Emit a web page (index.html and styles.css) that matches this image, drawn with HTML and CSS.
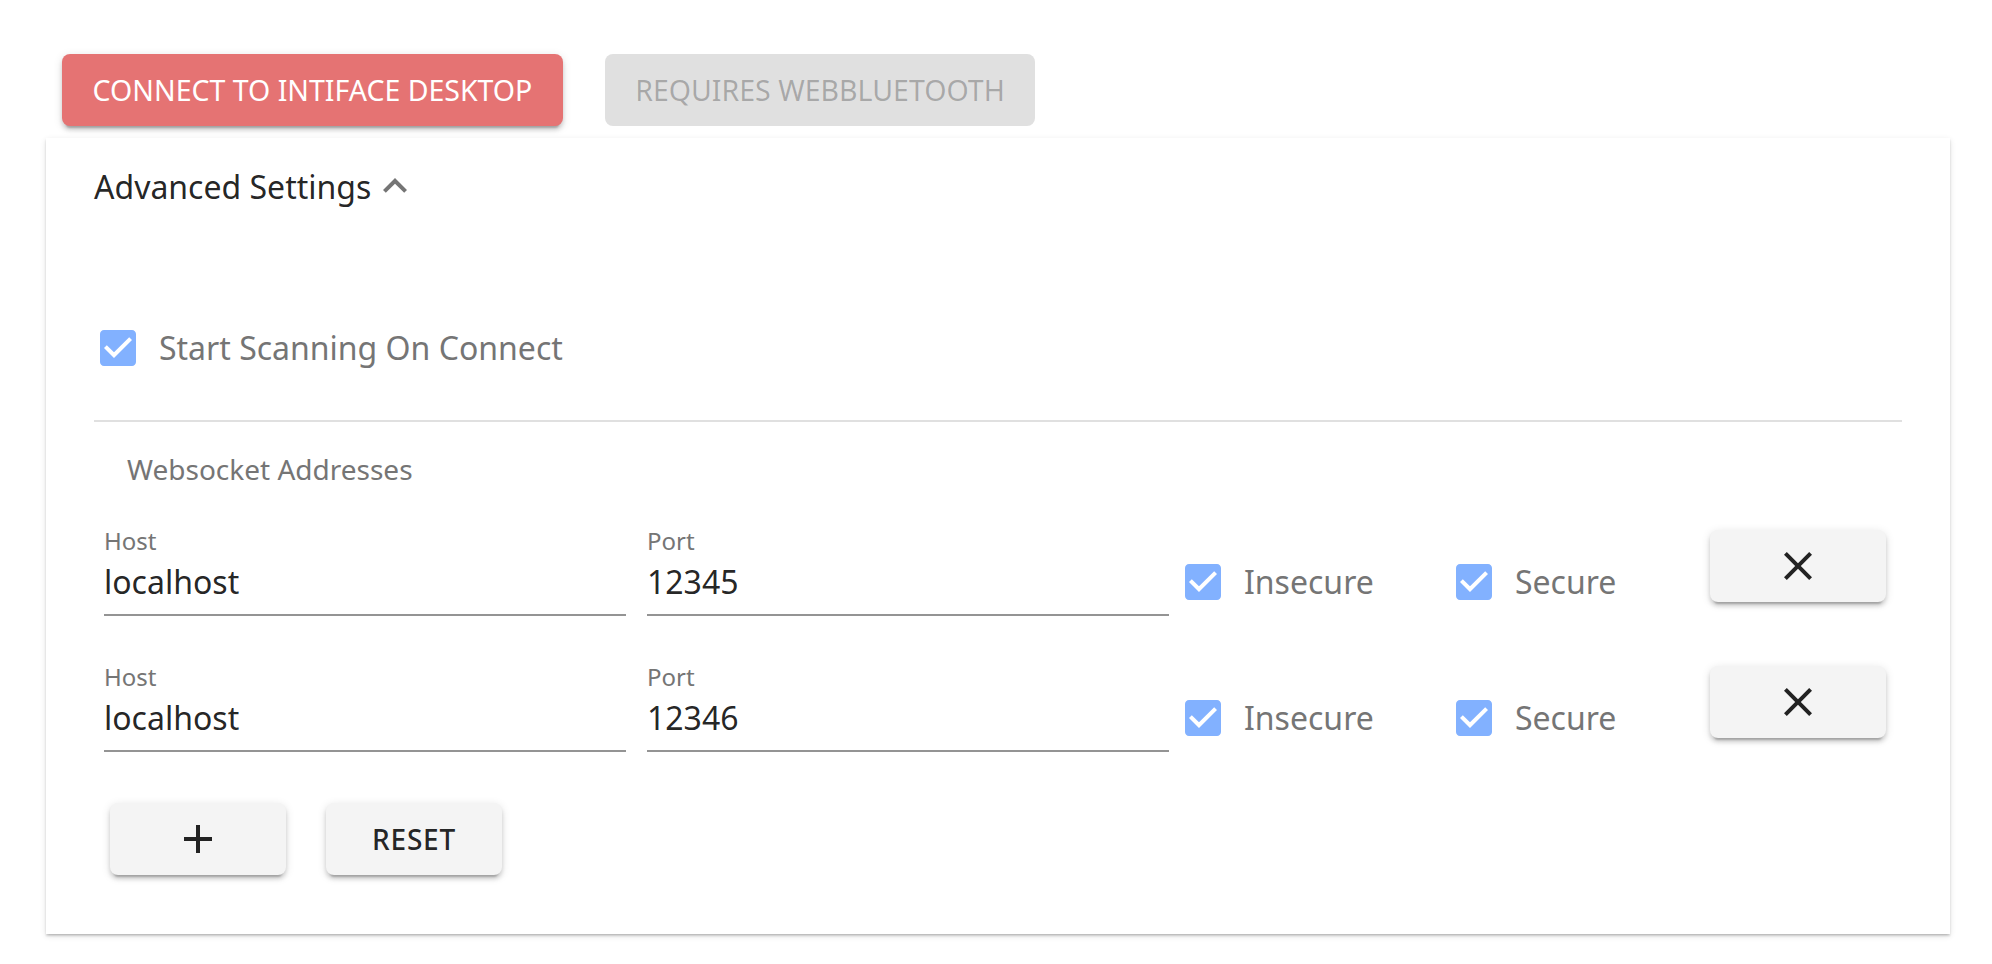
FILE: index.html
```html
<!DOCTYPE html>
<html>
<head>
<meta charset="utf-8">
<link rel="stylesheet" href="styles.css">
</head>
<body>
<div class="page">
  <div class="top-actions">
    <button class="btn btn-primary">Connect to Intiface Desktop</button>
    <button class="btn btn-disabled">Requires WebBluetooth</button>
  </div>
  <section class="panel">
    <div class="panel-summary">
      <span class="panel-title">Advanced Settings</span>
      <svg class="chevron" viewBox="0 0 24 24"><path d="M12 8l-6 6 1.41 1.41L12 10.83l4.59 4.58L18 14z"/></svg>
    </div>
    <div class="panel-details">
      <label class="check check-scan">
        <svg class="check-box" viewBox="3 3 18 18"><path d="M19 3H5c-1.11 0-2 .9-2 2v14c0 1.1.89 2 2 2h14c1.11 0 2-.9 2-2V5c0-1.1-.89-2-2-2zm-9 14l-5-5 1.41-1.41L10 14.17l7.59-7.59L19 8l-9 9z"/></svg>
        <span class="check-text">Start Scanning On Connect</span>
      </label>
      <div class="divider"></div>
      <div class="section-title">Websocket Addresses</div>

      <div class="addr-row">
        <div class="field field-host">
          <span class="field-label">Host</span>
          <span class="field-value">localhost</span>
        </div>
        <div class="field field-port">
          <span class="field-label">Port</span>
          <span class="field-value">12345</span>
        </div>
        <label class="check check-insecure">
          <svg class="check-box" viewBox="3 3 18 18"><path d="M19 3H5c-1.11 0-2 .9-2 2v14c0 1.1.89 2 2 2h14c1.11 0 2-.9 2-2V5c0-1.1-.89-2-2-2zm-9 14l-5-5 1.41-1.41L10 14.17l7.59-7.59L19 8l-9 9z"/></svg>
          <span class="check-text">Insecure</span>
        </label>
        <label class="check check-secure">
          <svg class="check-box" viewBox="3 3 18 18"><path d="M19 3H5c-1.11 0-2 .9-2 2v14c0 1.1.89 2 2 2h14c1.11 0 2-.9 2-2V5c0-1.1-.89-2-2-2zm-9 14l-5-5 1.41-1.41L10 14.17l7.59-7.59L19 8l-9 9z"/></svg>
          <span class="check-text">Secure</span>
        </label>
        <button class="btn btn-grey btn-remove">
          <svg class="icon" viewBox="0 0 24 24"><path d="M19 6.41L17.59 5 12 10.59 6.41 5 5 6.41 10.59 12 5 17.59 6.41 19 12 13.41 17.59 19 19 17.59 13.41 12z"/></svg>
        </button>
      </div>

      <div class="addr-row">
        <div class="field field-host">
          <span class="field-label">Host</span>
          <span class="field-value">localhost</span>
        </div>
        <div class="field field-port">
          <span class="field-label">Port</span>
          <span class="field-value">12346</span>
        </div>
        <label class="check check-insecure">
          <svg class="check-box" viewBox="3 3 18 18"><path d="M19 3H5c-1.11 0-2 .9-2 2v14c0 1.1.89 2 2 2h14c1.11 0 2-.9 2-2V5c0-1.1-.89-2-2-2zm-9 14l-5-5 1.41-1.41L10 14.17l7.59-7.59L19 8l-9 9z"/></svg>
          <span class="check-text">Insecure</span>
        </label>
        <label class="check check-secure">
          <svg class="check-box" viewBox="3 3 18 18"><path d="M19 3H5c-1.11 0-2 .9-2 2v14c0 1.1.89 2 2 2h14c1.11 0 2-.9 2-2V5c0-1.1-.89-2-2-2zm-9 14l-5-5 1.41-1.41L10 14.17l7.59-7.59L19 8l-9 9z"/></svg>
          <span class="check-text">Secure</span>
        </label>
        <button class="btn btn-grey btn-remove">
          <svg class="icon" viewBox="0 0 24 24"><path d="M19 6.41L17.59 5 12 10.59 6.41 5 5 6.41 10.59 12 5 17.59 6.41 19 12 13.41 17.59 19 19 17.59 13.41 12z"/></svg>
        </button>
      </div>

      <div class="bottom-actions">
        <button class="btn btn-grey btn-small">
          <svg class="icon" viewBox="0 0 24 24"><path d="M19 13h-6v6h-2v-6H5v-2h6V5h2v6h6v2z"/></svg>
        </button>
        <button class="btn btn-grey btn-small">Reset</button>
      </div>
    </div>
  </section>
</div>
</body>
</html>
```

FILE: styles.css
```css
* { box-sizing: border-box; }

html, body {
  margin: 0;
  padding: 0;
  background: #ffffff;
}

body {
  font-family: "Noto Sans", "Open Sans", "Liberation Sans", sans-serif;
  color: rgba(0, 0, 0, 0.87);
}

.page {
  padding: 54px 0 0 0;
}

.top-actions {
  display: flex;
  gap: 42px;
  padding-left: 62px;
}

.btn {
  font-family: inherit;
  font-size: 28px;
  font-weight: 500;
  letter-spacing: 0.8px;
  text-transform: uppercase;
  border: none;
  border-radius: 8px;
  height: 72px;
  display: flex;
  align-items: center;
  justify-content: center;
  padding: 0;
  cursor: pointer;
}

.btn-primary {
  width: 501px;
  font-size: 28.5px;
  font-weight: 400;
  letter-spacing: 0;
  background: #e57373;
  color: #ffffff;
  box-shadow: 0 6px 2px -4px rgba(0,0,0,0.2), 0 4px 4px 0 rgba(0,0,0,0.14), 0 2px 10px 0 rgba(0,0,0,0.12);
}

.btn-disabled {
  width: 430px;
  font-size: 28.5px;
  font-weight: 400;
  letter-spacing: 0;
  background: #e0e0e0;
  color: rgba(0, 0, 0, 0.26);
}

.btn-grey {
  background: #f4f4f4;
  color: rgba(0, 0, 0, 0.87);
  width: 176px;
  box-shadow: 0 6px 2px -4px rgba(0,0,0,0.2), 0 4px 4px 0 rgba(0,0,0,0.14), 0 2px 10px 0 rgba(0,0,0,0.12);
}

.icon {
  width: 48px;
  height: 48px;
  fill: #222222;
}

.panel {
  margin: 12px 0 30px 46px;
  width: 1904px;
  background: #ffffff;
  box-shadow: 0 2px 2px -2px rgba(0,0,0,0.2), 0 2px 2px 0 rgba(0,0,0,0.14), 0 2px 6px 0 rgba(0,0,0,0.12);
}

.panel-summary {
  height: 96px;
  padding: 2px 48px 0 48px;
  display: flex;
  align-items: center;
}

.panel-title {
  font-size: 32px;
  line-height: 48px;
  color: rgba(0, 0, 0, 0.87);
}

.chevron {
  width: 48px;
  height: 48px;
  fill: #757575;
  margin-top: -2px;
}

.panel-details {
  padding: 96px 48px 59px 48px;
  display: flex;
  flex-direction: column;
}

.check {
  display: flex;
  align-items: center;
  height: 36px;
  gap: 23px;
}

.check-box {
  width: 36px;
  height: 36px;
  fill: #82b1ff;
  flex: none;
}

.check-text {
  font-size: 32px;
  line-height: 36px;
  color: #757575;
  white-space: nowrap;
}

.check-scan {
  margin-left: 6px;
}

.divider {
  margin-top: 54px;
  height: 2px;
  background: #e0e0e0;
}

.section-title {
  margin-top: 28px;
  padding-left: 33px;
  font-size: 28px;
  line-height: 38px;
  color: #757575;
}

.addr-row {
  display: flex;
  align-items: flex-start;
  height: 136px;
  padding-left: 10px;
}

.section-title + .addr-row {
  margin-top: 41px;
}

.field {
  width: 522px;
  display: flex;
  flex-direction: column;
  border-bottom: 2px solid #949494;
  padding-bottom: 13px;
}

.field-port {
  margin-left: 21px;
}

.field-label {
  font-size: 24px;
  line-height: 24px;
  color: #757575;
}

.field-value {
  margin-top: 10px;
  font-size: 32px;
  line-height: 38px;
  color: rgba(0, 0, 0, 0.87);
}

.check-insecure {
  margin-left: 16px;
  margin-top: 35px;
  width: 271px;
}

.check-secure {
  margin-top: 35px;
  width: 254px;
}

.btn-remove {
  margin-top: 1px;
}

.bottom-actions {
  display: flex;
  gap: 40px;
  margin-top: 2px;
  padding-left: 16px;
}
```
